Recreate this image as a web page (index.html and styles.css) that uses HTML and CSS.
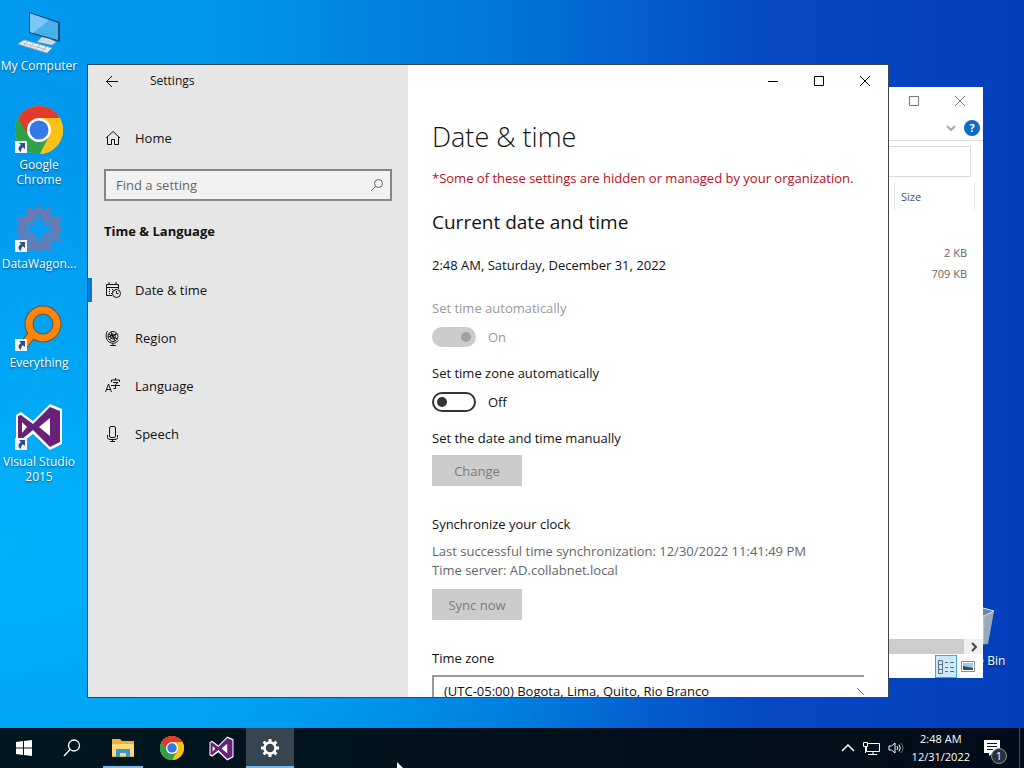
FILE: index.html
```html
<!DOCTYPE html>
<html lang="en">

<head>
	<meta charset="utf-8">
	<title>Settings</title>
	<link rel="stylesheet" href="styles.css">
</head>

<body>
	<!-- shared icons -->
	<svg class="sprite" aria-hidden="true">
		<symbol id="chrome" viewBox="0 0 48 48">
			<circle cx="24" cy="24" r="24" fill="#fbc116" />
			<path d="M24 24 3.200 12A24 24 0 0 0 20 47.700L34.400 30z" fill="#30a04a" />
			<path d="M20 47.700A24 24 0 0 0 25 48L35 29H13.600z" fill="#30a04a" />
			<path d="M44.800 12A24 24 0 0 0 3.200 12L13.600 30 24 24V12z" fill="#e23b2e" />
			<path d="M3.200 12A24 24 0 0 0 20 47L25 35 13.600 30z" fill="#30a04a" />
			<path d="M24 12H44.800A24 24 0 0 1 25 48L34.400 30z" fill="#fbc116" />
			<circle cx="24" cy="24" r="12" fill="#fff" />
			<circle cx="24" cy="24" r="9.500" fill="#3579e8" />
		</symbol>
		<symbol id="vs" viewBox="0 0 48 48">
			<path d="M35 1 47 6V41L35 47 18 31 6 40 1 37V12L6 9 18 18z" fill="#fff" />
			<path d="M35 4 45 8V39L35 44 18 27 6 37 3 35V13L6 12 18 21zM35 15 24 24 35 33zM7 19V30L12 24z" fill="#68217a" fill-rule="evenodd" />
		</symbol>
		<symbol id="shortcut" viewBox="0 0 12 12">
			<path d="M0 0H12V12H0z" fill="#f4f4f4" />
			<path d="M4 2H10V8L8 6.200C6 7.500 6 9 6 11 2.500 9 3 6 6 4z" fill="#2d4f8f" />
		</symbol>
	</svg>

	<div class="desktop">
		<div class="icons">
			<div class="icon">
				<svg class="picture" viewBox="0 0 48 48">
					<path d="M14 5 45 15V35L14 26z" fill="#1f4f70" />
					<path d="M15 6.500 43 16V33L15 25z" fill="#49b0ee" />
					<path d="M15 6.500 34 13 18 26 15 25z" fill="#7ac8f6" />
					<path d="M27 30 35 32 41 35 37 38 22 35z" fill="#ccd8de" />
					<path d="M9 33 37 41 32 46 3 37z" fill="#eef2f4" stroke="#9aaab4" />
					<path d="M8 36 32 43M13 34 8 39M19 36 14 41M25 38 20 43M31 40 26 45" stroke="#aab6be" fill="none" />
				</svg>
				<span class="label">My Computer</span>
			</div>
			<div class="icon">
				<svg class="picture" viewBox="0 0 48 48">
					<use href="#chrome" />
					<use href="#shortcut" x="0" y="35" width="12" height="12" />
				</svg>
				<span class="label">Google Chrome</span>
			</div>
			<div class="icon">
				<svg class="picture" viewBox="0 0 48 48">
					<g fill="none" stroke="#8a6f9c" stroke-width="1.500">
						<path d="M13 3 24 14 35 3 34 14 46 13 35 24 46 35 34 34 35 45 24 34 13 45 14 34 2 35 13 24 2 13 14 14z" />
						<path d="M24 1 31 9 29 19 39 17 47 24 39 31 29 29 31 39 24 46 17 39 19 29 9 31 1 24 9 17 19 19 17 9z" />
						<path d="M24 8 35 13 40 24 35 35 24 40 13 35 8 24 13 13z" />
						<path d="M17 5H31L43 17V31L31 43H17L5 31V17zM24 5 43 24 24 43 5 24z" stroke="#7d74a8" />
						<path d="M24 13 32 16 35 24 32 32 24 35 16 32 13 24 16 16z" stroke="#657fb4" />
					</g>
					<use href="#shortcut" x="0" y="35" width="12" height="12" />
				</svg>
				<span class="label">DataWagon...</span>
			</div>
			<div class="icon">
				<svg class="picture" viewBox="0 0 48 48">
					<path d="M17 30 9 41" stroke="#6b5434" stroke-width="9" />
					<circle cx="28" cy="20" r="14" fill="none" stroke="#6b5434" stroke-width="9" />
					<path d="M19 28 9 41" stroke="#ff860d" stroke-width="7" />
					<circle cx="28" cy="20" r="14" fill="none" stroke="#ff860d" stroke-width="7" />
					<use href="#shortcut" x="0" y="35" width="12" height="12" />
				</svg>
				<span class="label">Everything</span>
			</div>
			<div class="icon">
				<svg class="picture" viewBox="0 0 48 48">
					<use href="#vs" />
					<use href="#shortcut" x="0" y="35" width="12" height="12" />
				</svg>
				<span class="label">Visual Studio 2015</span>
			</div>
		</div>

		<div class="icon recycle">
			<svg class="picture" viewBox="0 0 48 48">
				<path d="M6 10 26 4 44 9 38 42 14 44z" fill="#9aa9bb" />
				<path d="M6 10 26 4 44 9 34 14z" fill="#6f83a0" stroke="#dfe6ee" />
				<path d="M34 14 33 42" stroke="#c2ccd8" />
			</svg>
			<span class="label">Recycle Bin</span>
		</div>

		<section class="explorer">
			<div class="explorer-title">
				<button class="explorer-btn" aria-label="Maximize"><svg width="12" height="12"><path d="M1.500 1.500H10.500V10.500H1.500z" /></svg></button>
				<button class="explorer-btn" aria-label="Close"><svg width="12" height="12"><path d="M1 1 11 11M11 1 1 11" /></svg></button>
			</div>
			<div class="ribbon">
				<svg width="10" height="8"><path d="M1 2 5 6 9 2" fill="none" stroke="#aaa" stroke-width="2" /></svg>
				<button class="help" aria-label="Help">?</button>
			</div>
			<input class="address" type="text" aria-label="Address">
			<table class="files">
				<thead>
					<tr><th>Size</th></tr>
				</thead>
				<tbody>
					<tr><td>2 KB</td></tr>
					<tr><td>709 KB</td></tr>
				</tbody>
			</table>
			<div class="scrollbar">
				<svg width="19" height="15"><path d="M8 4 12 8 8 12" fill="none" stroke="#444" stroke-width="2" /></svg>
			</div>
			<div class="views">
				<button class="view selected" aria-label="Details">
					<svg width="18" height="16" fill="none" stroke="#567184">
						<path d="M1.500 1.500H5.500V5.500H1.500zM1.500 5.500H5.500V10.500H1.500zM1.500 10.500H5.500V14.500H1.500zM8 3.500H11M13 3.500H17M8 8.500H11M13 8.500H17M8 12.500H11M13 12.500H17" />
					</svg>
				</button>
				<button class="view" aria-label="Large icons">
					<svg width="14" height="11">
						<path d="M.5.5H13.500V10.500H.5z" fill="#fff" stroke="#8c8c8c" />
						<path d="M2 2H12V9H2z" fill="#9fcbea" />
						<path d="M2 5 12 7V9H2z" fill="#2f4a63" />
					</svg>
				</button>
			</div>
		</section>

		<section class="settings">
			<aside class="sidebar">
				<div class="titlebar">
					<button class="back" aria-label="Back"><svg width="14" height="12"><path d="M7 1 1.500 6.500 7 12M1.500 6.500H13" fill="none" stroke="#111" /></svg></button>
					<span>Settings</span>
				</div>
				<a class="nav-link home" href="#">
					<svg class="nav-icon" viewBox="0 0 16 16"><path d="M1 8 8 1.500 15 8M2.500 7V14.500H6.500V9.500H9.500V14.500H13.500V7" /></svg>
					Home
				</a>
				<div class="search">
					<input type="text" placeholder="Find a setting" aria-label="Find a setting">
					<svg width="14" height="14"><path d="M1 13 6 8" /><circle cx="8.500" cy="5.500" r="4" /></svg>
				</div>
				<h3>Time &amp; Language</h3>
				<nav>
					<a class="nav-link active" href="#">
						<svg class="nav-icon" viewBox="0 0 16 16">
							<path d="M7 13.500H1.500V2.500H13.500V7M1.500 5.500H13.500M4 0V3M11 0V3" />
							<path d="M4 7.500H5M7 7.500H8M10 7.500H11M4 9.500H5M7 9.500H8M4 11.500H5M6 11.500H7" />
							<circle cx="11.500" cy="11.500" r="4" />
							<path d="M11.500 9V11.500H13.500" />
						</svg>
						Date &amp; time
					</a>
					<a class="nav-link" href="#">
						<svg class="nav-icon" viewBox="0 0 16 16">
							<circle cx="8" cy="6.500" r="5" />
							<circle cx="8" cy="6.500" r="2.500" />
							<path d="M3.500 4 12.500 9M4.500 10 11.500 3M6 2 10 11M3 7 12 4" />
							<path d="M2.500 1C0 5 1 11 5 12.500S11 13 13.500 10.500M8 13V15.500M5 15.500H11" />
						</svg>
						Region
					</a>
					<a class="nav-link" href="#">
						<svg class="nav-icon" viewBox="0 0 16 16">
							<path d="M.5 14 3.500 6 6.500 14M1.500 11.500H5.500" />
							<path d="M10.500 0V2M6.500 4V2H14.500V4M8 4.500H13L10.500 6.500V10.500H8.500M6 7.500H15" />
						</svg>
						Language
					</a>
					<a class="nav-link" href="#">
						<svg class="nav-icon" viewBox="0 0 16 16">
							<rect x="4.500" y=".5" width="6" height="11" rx="1.500" />
							<path d="M2.500 9V11.500Q2.500 13.500 5 13.500H10Q12.500 13.500 12.500 11.500V9M7.500 13.500V15.500M5 15.500H10" />
						</svg>
						Speech
					</a>
				</nav>
			</aside>

			<main class="content">
				<div class="controls">
					<button aria-label="Minimize"><svg width="12" height="12"><path d="M1 6.500H11" /></svg></button>
					<button aria-label="Maximize"><svg width="12" height="12"><path d="M1.500 1.500H10.500V10.500H1.500z" /></svg></button>
					<button aria-label="Close"><svg width="12" height="12"><path d="M1 1 11 11M11 1 1 11" /></svg></button>
				</div>
				<div class="page">
					<h1>Date &amp; time</h1>
					<p class="warning">*Some of these settings are hidden or managed by your organization.</p>
					<h2>Current date and time</h2>
					<p class="now">2:48 AM, Saturday, December 31, 2022</p>

					<div class="field disabled">
						<label for="auto-time">Set time automatically</label>
						<div class="switch"><input id="auto-time" type="checkbox" checked disabled><span>On</span></div>
					</div>
					<div class="field">
						<label for="auto-zone">Set time zone automatically</label>
						<div class="switch"><input id="auto-zone" type="checkbox"><span>Off</span></div>
					</div>

					<p>Set the date and time manually</p>
					<button class="action" disabled>Change</button>

					<p class="sync-title">Synchronize your clock</p>
					<p class="sync-info">Last successful time synchronization: 12/30/2022 11:41:49 PM<br>Time server: AD.collabnet.local</p>
					<button class="action" disabled>Sync now</button>

					<label class="zone-label" for="zone">Time zone</label>
					<div class="zone">
						<select id="zone">
							<option>(UTC-05:00) Bogota, Lima, Quito, Rio Branco</option>
						</select>
						<svg width="7" height="8"><path d="M0 1 7 8" stroke="#666" fill="none" /></svg>
					</div>
				</div>
			</main>
		</section>
	</div>

	<footer class="taskbar">
		<button class="task" aria-label="Start"><svg width="16" height="16" fill="#fff"><path d="M0 2 7 1V7.500H0zM8 1 16 0V7.500H8zM0 8.500H7V15L0 14zM8 8.500H16V16L8 15z" /></svg></button>
		<button class="task" aria-label="Search"><svg width="18" height="18" fill="none" stroke="#fff" stroke-width="1.300"><circle cx="11" cy="6.500" r="5.500" /><path d="M7 10.500 1 17" /></svg></button>
		<div class="apps">
			<button class="task open" aria-label="File Explorer">
				<svg width="22" height="18">
					<path d="M0 0H8L10 2H22V18H0z" fill="#e9b23c" />
					<path d="M0 5H22V17H0z" fill="#fbd976" />
					<path d="M4 18V10H18V18H14V14H8V18z" fill="#3e93cf" />
				</svg>
			</button>
			<button class="task" aria-label="Google Chrome"><svg width="24" height="24"><use href="#chrome" /></svg></button>
			<button class="task" aria-label="Visual Studio"><svg width="25" height="25"><use href="#vs" /></svg></button>
			<button class="task open current" aria-label="Settings">
				<svg width="18" height="18" fill="none" stroke="#fff">
					<circle cx="9" cy="9" r="5.500" stroke-width="2.500" />
					<path d="M9 0V3M9 15V18M0 9H3M15 9H18M2.600 2.600 4.800 4.800M13.200 13.200 15.400 15.400M2.600 15.400 4.800 13.200M13.200 4.800 15.400 2.600" stroke-width="3" />
				</svg>
			</button>
		</div>
		<div class="tray">
			<svg width="14" height="8" fill="none" stroke="#fff" stroke-width="1.500"><path d="M1 7 7 1 13 7" /></svg>
			<svg width="17" height="15" fill="none" stroke="#fff"><path d="M5 2.500H16.500V10.500H3.500V6M.5 1.500H4.500V5.500H.5zM2.500 5V12M10 11V13.500M5 13.500H14" /></svg>
			<svg width="16" height="14" fill="none" stroke="#fff"><path d="M1 5H3.500L7 2V12L3.500 9H1zM9 5Q10.500 7 9 9M11 3.500Q13.500 7 11 10.500" /><path d="M13 2Q17 7 13 12" stroke="#777" /></svg>
		</div>
		<div class="clock">2:48 AM<br>12/31/2022</div>
		<button class="notifications" aria-label="Notifications">
			<svg width="17" height="16"><path d="M0 0H16V13H9L5 16V13H0z" fill="#fff" /><path d="M3 3.500H13M3 6.500H13M3 9.500H9" stroke="#06131f" /></svg>
			<span class="badge">1</span>
		</button>
	</footer>

	<svg class="cursor" width="8" height="6"><path d="M0 0 6 6H0z" fill="#fff" /></svg>
</body>

</html>
```
FILE: styles.css
```css
* {
	box-sizing: border-box;
	margin: 0;
	padding: 0;
}

body {
	height: 100vh;
	display: flex;
	flex-direction: column;
	overflow: hidden;
	font-family: "Open Sans", "Noto Sans", sans-serif;
	font-size: 13px;
	line-height: 20px;
	color: #111;
}

button,
input,
select {
	font: inherit;
	color: inherit;
	border: 0;
	background: none;
}

svg {
	flex: none;
}

.sprite {
	position: absolute;
	width: 0;
	height: 0;
}

/* desktop */
.desktop {
	flex: 1;
	position: relative;
	background:
		radial-gradient(ellipse at 0 75%, #00b2fb 0%, rgba(0, 178, 251, 0) 50%),
		linear-gradient(90deg, #009af0 0%, #0097ec 20%, #0074db 50%, #0648c4 75%, #033fba 100%);
}

.icons {
	display: grid;
	grid-auto-rows: 99px;
	width: 78px;
}

.icon {
	display: flex;
	flex-direction: column;
	align-items: center;
	gap: 3px;
	width: 78px;
	padding-top: 7px;
}

.picture {
	width: 48px;
	height: 48px;
}

.label {
	color: #fff;
	font-size: 12px;
	line-height: 15px;
	text-align: center;
	text-shadow: 0 1px 2px rgba(0, 0, 0, 0.5);
}

.recycle {
	position: absolute;
	right: 11px;
	bottom: 60px;
}

/* file explorer window */
.explorer {
	position: absolute;
	inset: 87px 41px 50px 480px;
	display: flex;
	flex-direction: column;
	background: #fff;
	font-size: 11px;
	color: #666;
}

.explorer-title {
	display: flex;
	justify-content: flex-end;
	height: 28px;
}

.explorer-btn {
	width: 46px;
	line-height: 0;
	stroke: #777;
	fill: none;
}

.ribbon {
	display: flex;
	justify-content: flex-end;
	align-items: center;
	gap: 8px;
	height: 26px;
	padding-right: 3px;
	border-bottom: 1px solid #ddd;
}

.help {
	width: 16px;
	height: 16px;
	border-radius: 50%;
	background: #0a6fc2;
	color: #fff;
	font-weight: bold;
	line-height: 16px;
}

.address {
	height: 31px;
	margin: 5px 12px 0 0;
	border: 1px solid #d9d9d9;
}

.files {
	margin: 6px 8px 0 auto;
	width: 81px;
	border-collapse: separate;
	border-spacing: 0;
}

.files th {
	height: 27px;
	padding-left: 6px;
	border: solid #e5e5e5;
	border-width: 0 1px;
	font-weight: normal;
	text-align: left;
	color: #44546a;
}

.files tbody::before {
	content: "";
	display: block;
	height: 32px;
}

.files td {
	height: 21px;
	padding-right: 8px;
	text-align: right;
}

.scrollbar {
	display: flex;
	justify-content: flex-end;
	height: 15px;
	margin-top: auto;
	background: #cdcdcd;
}

.scrollbar svg {
	background: #f0f0f0;
}

.views {
	display: flex;
	justify-content: flex-end;
	height: 24px;
	padding: 1px 4px 0 0;
}

.view {
	display: flex;
	align-items: center;
	justify-content: center;
	width: 22px;
}

.view.selected {
	border: 1px solid #3fa9d8;
	background: #cde8f6;
}

/* settings window */
.settings {
	position: absolute;
	inset: 64px 135px 30px 87px;
	display: grid;
	grid-template-columns: 320px 1fr;
	overflow: hidden;
	border: 1px solid #3a4650;
	background: #fff;
}

.sidebar {
	background: #e6e6e6;
}

.titlebar {
	display: flex;
	align-items: center;
	gap: 14px;
	height: 32px;
	font-size: 12px;
}

.back {
	width: 48px;
	height: 32px;
	line-height: 0;
}

.nav-link {
	display: flex;
	align-items: center;
	gap: 14px;
	height: 48px;
	padding-left: 17px;
	color: #111;
	text-decoration: none;
}

.home {
	margin-top: 17px;
}

.nav-icon {
	width: 16px;
	height: 16px;
	fill: none;
	stroke: #111;
}

.active {
	background: linear-gradient(#0078d7, #0078d7) 0 center / 4px 24px no-repeat;
}

.search {
	display: flex;
	align-items: center;
	height: 32px;
	margin: 7px 16px 0;
	padding: 0 6px 0 10px;
	border: 2px solid #868686;
	background: #f2f2f2;
}

.search input {
	flex: 1;
	outline: 0;
}

.search input::placeholder {
	color: #666;
}

.search svg {
	fill: none;
	stroke: #666;
}

h3 {
	margin: 20px 16px 25px;
	font-size: 13px;
	font-weight: bold;
}

.content {
	min-width: 0;
	white-space: nowrap;
}

.controls {
	display: flex;
	justify-content: flex-end;
	height: 32px;
}

.controls button {
	width: 46px;
	line-height: 0;
	fill: none;
	stroke: #000;
}

.page {
	padding: 22px 24px 0;
}

h1 {
	margin-bottom: 13px;
	font-size: 27px;
	font-weight: 300;
	line-height: 36px;
}

h2 {
	margin: 20px 0 19px;
	font-size: 19px;
	font-weight: normal;
	line-height: 28px;
}

.warning {
	color: #b90e24;
}

.now {
	margin-bottom: 23px;
}

.field {
	margin-bottom: 16px;
}

.field label,
.zone-label {
	display: block;
}

.disabled {
	color: #999;
}

.switch {
	display: flex;
	align-items: center;
	gap: 12px;
	margin-top: 9px;
}

.switch input {
	appearance: none;
	display: flex;
	align-items: center;
	width: 44px;
	height: 20px;
	padding: 0 3px;
	border: 2px solid #333;
	border-radius: 10px;
}

.switch input::before {
	content: "";
	width: 10px;
	height: 10px;
	border-radius: 50%;
	background: #333;
}

.switch input:checked {
	justify-content: flex-end;
	border-color: #ccc;
	background: #ccc;
}

.switch input:checked::before {
	background: #a0a0a0;
}

.action {
	display: block;
	width: 90px;
	height: 31px;
	margin-top: 7px;
	background: #ccc;
	color: #7a7a7a;
}

.sync-title {
	margin: 28px 0 8px;
}

.sync-info {
	padding-bottom: 2px;
	line-height: 19px;
	color: #666;
}

.zone-label {
	margin: 28px 0 7px;
}

.zone {
	position: relative;
}

.zone select {
	appearance: none;
	width: 100%;
	height: 32px;
	padding-left: 10px;
	border: 2px solid #999;
	border-right: 0;
}

.zone svg {
	position: absolute;
	top: 12px;
	right: 0;
}

/* taskbar */
.taskbar {
	display: flex;
	height: 40px;
	background: linear-gradient(90deg, #011720, #020c18);
	color: #fff;
	font-size: 11px;
}

.task {
	display: flex;
	align-items: center;
	justify-content: center;
	width: 48px;
}

.apps {
	display: flex;
	gap: 1px;
	margin: 0 auto 0 3px;
}

.open {
	background: linear-gradient(#76b9ed, #76b9ed) center bottom / 40px 2px no-repeat;
}

.current {
	background-color: #364651;
	background-size: 100% 2px;
}

.tray {
	display: flex;
	align-items: center;
	gap: 8px;
	padding-right: 8px;
}

.clock {
	padding: 2px 0;
	line-height: 18px;
	text-align: center;
}

.notifications {
	position: relative;
	display: flex;
	align-items: center;
	width: 36px;
	margin: 0 4px 0 14px;
	border-right: 1px solid #44505a;
}

.badge {
	position: absolute;
	left: 7px;
	bottom: 4px;
	width: 16px;
	height: 16px;
	border: 1px solid #8a939a;
	border-radius: 50%;
	background: #27323b;
	font-size: 11px;
	line-height: 14px;
}

.cursor {
	position: absolute;
	left: 397px;
	bottom: 0;
}
```
